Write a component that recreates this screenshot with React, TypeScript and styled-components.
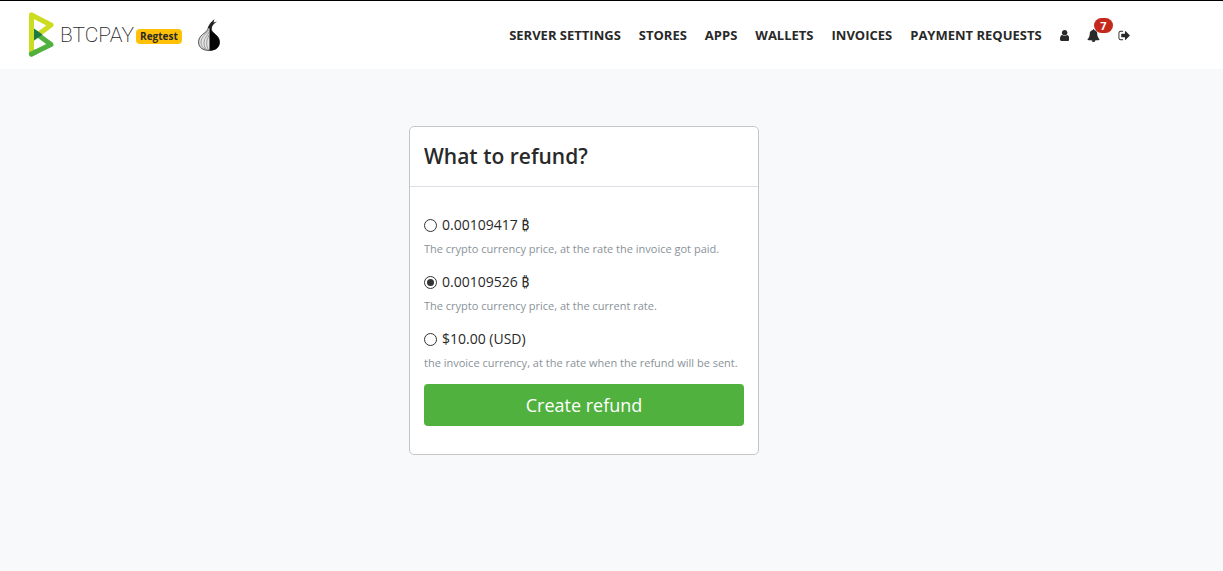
import React from "react";
import styled, { createGlobalStyle } from "styled-components";

const GlobalStyle = createGlobalStyle`
  *, *::before, *::after { box-sizing: border-box; }
  body {
    margin: 0;
    background: #f8f9fb;
    color: #292929;
    font-family: "Open Sans", "Noto Sans", sans-serif;
    font-size: 14px;
    line-height: 22px;
  }
`;

const Header = styled.header`
  background: #fff;
  border-top: 1px solid #000;
  padding-right: 55px;
`;

const HeaderInner = styled.div`
  display: flex;
  align-items: center;
  justify-content: space-between;
  max-width: 1140px;
  height: 68px;
  margin: 0 auto;
  padding: 0 15px 0 14px;
`;

const Brand = styled.div`
  display: flex;
  align-items: center;
`;

const Logo = styled.a`
  display: flex;
  align-items: center;
  gap: 6px;
  color: #292929;
  text-decoration: none;
`;

const LogoMark = styled.svg`
  display: block;
  width: 26px;
  height: 46px;
`;

const Wordmark = styled.span`
  font-family: Roboto, sans-serif;
  font-size: 21px;
  font-weight: 200;
  line-height: 26px;
`;

const NetworkBadge = styled.span`
  margin: 2px 0 0 2px;
  padding: 0 4px;
  border-radius: 4px;
  background: #ffc107;
  font-size: 10px;
  font-weight: 700;
  line-height: 15px;
`;

const Onion = styled.svg`
  display: block;
  width: 22px;
  height: 34px;
  margin-left: 16px;
`;

const Nav = styled.nav`
  display: flex;
  align-items: center;
`;

const NavLink = styled.a`
  position: relative;
  display: flex;
  align-items: center;
  padding: 0 9px;
  color: #292929;
  font-size: 13px;
  font-weight: 700;
  line-height: 20px;
  text-decoration: none;
  text-transform: uppercase;
  white-space: nowrap;
`;

const NavIcon = styled.svg`
  display: block;
  height: 13px;
  fill: currentColor;
`;

const Count = styled.span`
  position: absolute;
  top: -11px;
  left: 16px;
  width: 19px;
  border-radius: 8px;
  background: #c4291c;
  color: #fff;
  font-size: 11px;
  line-height: 15px;
  text-align: center;
`;

const Main = styled.main`
  display: flex;
  justify-content: center;
  padding: 57px 55px 57px 0;
`;

const Card = styled.section`
  width: 350px;
  max-width: 100%;
  border: 1px solid #c4c6c8;
  border-radius: 5px;
  background: #fff;
`;

const CardTitle = styled.h1`
  margin: 0;
  padding: 15px 14px 16px;
  border-bottom: 1px solid #dedee6;
  font-size: 21px;
  font-weight: 600;
  line-height: 28px;
`;

const RefundForm = styled.form`
  padding: 27px 14px 28px;
`;

const Options = styled.div`
  display: grid;
  gap: 14px;
`;

const OptionLabel = styled.label`
  display: flex;
  align-items: center;
  gap: 5px;
  margin-bottom: 4px;
`;

const Radio = styled.input`
  appearance: none;
  display: grid;
  place-content: center;
  width: 13px;
  height: 13px;
  margin: 0;
  border: 1px solid #333;
  border-radius: 50%;
  background: #fff;

  &:checked::before {
    content: "";
    width: 7px;
    height: 7px;
    border-radius: 50%;
    background: #333;
  }
`;

const Hint = styled.p`
  margin: 0;
  color: #8a9299;
  font-size: 11px;
  line-height: 17px;
`;

const SubmitButton = styled.button`
  display: block;
  width: 100%;
  margin-top: 13px;
  padding: 8px 14px;
  border: 0;
  border-radius: 4px;
  background: #51b13e;
  color: #fff;
  font-family: inherit;
  font-size: 18px;
  line-height: 26px;
`;

const links = ["Server settings", "Stores", "Apps", "Wallets", "Invoices", "Payment requests"];

const options = [
  { id: "paid", label: "0.00109417 ₿", hint: "The crypto currency price, at the rate the invoice got paid." },
  { id: "current", label: "0.00109526 ₿", hint: "The crypto currency price, at the current rate." },
  { id: "fiat", label: "$10.00 (USD)", hint: "the invoice currency, at the rate when the refund will be sent." },
];

export default function App() {
  return (
    <>
      <GlobalStyle />
      <Header>
        <HeaderInner>
          <Brand>
            <Logo href="#">
              <LogoMark viewBox="0 0 26 46" fill="none" strokeWidth="5" strokeLinecap="round" strokeLinejoin="round" aria-hidden="true">
                <path d="M3.5 42V3L23 13L3.5 27.5" stroke="#cedc21" />
                <path d="M3.5 42L23 32.5L6 20" stroke="#51b13e" />
                <path d="M3.5 3V38" stroke="#cedc21" />
                <path d="M3.5 42L8 39.8" stroke="#51b13e" />
                <path d="M6 16.5L14.5 22.5L6 28.5Z" fill="#1e7a44" />
              </LogoMark>
              <Wordmark>BTCPAY</Wordmark>
            </Logo>
            <NetworkBadge>Regtest</NetworkBadge>
            <Onion viewBox="0 0 22 34" role="img" aria-label="Tor">
              <path d="M10.5 9C10 13 7 14.5 4.5 16.5C1.5 19 .6 21.5 .6 24.2C.6 29.5 5 32.4 11 32.4C17 32.4 21.4 29.5 21.4 24.2C21.4 21.5 20.5 19 17.5 16.5C15 14.5 13 13 13 9Z" fill="#e4e4e4" stroke="#333" strokeWidth="0.9" />
              <path d="M11.5 10V32.6C17.5 32.6 21.6 29.5 21.6 24.2C21.6 21.5 20.5 19 17.5 16.5C15 14.5 13 13 13 10Z" fill="#050505" />
              <path d="M10.5 12C9 16 3 18.5 3 24C3 27.5 4.5 29.5 7 31M11 14C9.5 18 6 20 6 24.5C6 28 7 30 9 32M11 17C10 20 8.7 22 8.7 25C8.7 28 9.5 30 10.5 32" fill="none" stroke="#888" strokeWidth="0.8" />
              <path d="M10 10C10.5 7 12 5 16.5 1L15.5 4.5L19 3.5C15.5 6 13.8 8 13.5 11Z" fill="#222" />
            </Onion>
          </Brand>
          <Nav>
            {links.map((text) => (
              <NavLink key={text} href="#">{text}</NavLink>
            ))}
            <NavLink href="#" aria-label="Account">
              <NavIcon viewBox="0 0 1280 1792">
                <path d="M1280 1399q0 109-62.5 187t-150.5 78h-854q-88 0-150.5-78t-62.5-187q0-85 8.5-160.5t31.5-152 58.5-131 94-89 134.5-34.5q131 128 313 128t313-128q76 0 134.5 34.5t94 89 58.5 131 31.5 152 8.5 160.5zm-256-887q0 159-112.5 271.5t-271.5 112.5-271.5-112.5-112.5-271.5 112.5-271.5 271.5-112.5 271.5 112.5 112.5 271.5z" />
              </NavIcon>
            </NavLink>
            <NavLink href="#" aria-label="Notifications">
              <NavIcon viewBox="0 0 1792 1792">
                <path d="M912 1696q0-16-16-16-59 0-101.5-42.5t-42.5-101.5q0-16-16-16t-16 16q0 73 51.5 124.5t124.5 51.5q16 0 16-16zm816-288q0 52-38 90t-90 38h-448q0 106-75 181t-181 75-181-75-75-181h-448q-52 0-90-38t-38-90q50-42 91-88t85-119.5 74.5-158.5 50-206 19.5-260q0-152 117-282.5t307-158.5q-8-19-8-39 0-40 28-68t68-28 68 28 28 68q0 20-8 39 190 28 307 158.5t117 282.5q0 139 19.5 260t50 206 74.5 158.5 85 119.5 91 88z" />
              </NavIcon>
              <Count>7</Count>
            </NavLink>
            <NavLink href="#" aria-label="Logout">
              <NavIcon viewBox="0 0 1664 1792">
                <path d="M704 1440q0 4 1 20t.5 26.5-3 23.5-10 19.5-20.5 6.5h-320q-119 0-203.5-84.5t-84.5-203.5v-704q0-119 84.5-203.5t203.5-84.5h320q13 0 22.5 9.5t9.5 22.5q0 4 1 20t.5 26.5-3 23.5-10 19.5-20.5 6.5h-320q-66 0-113 47t-47 113v704q0 66 47 113t113 47h312l11.5 1 11.5 3 8 5.5 7 9 2 13.5zm928-544q0 26-19 45l-544 544q-19 19-45 19t-45-19-19-45v-288h-448q-26 0-45-19t-19-45v-384q0-26 19-45t45-19h448v-288q0-26 19-45t45-19 45 19l544 544q19 19 19 45z" />
              </NavIcon>
            </NavLink>
          </Nav>
        </HeaderInner>
      </Header>
      <Main>
        <Card>
          <CardTitle>What to refund?</CardTitle>
          <RefundForm onSubmit={(event: React.FormEvent) => event.preventDefault()}>
            <Options>
              {options.map(({ id, label, hint }) => (
                <div key={id}>
                  <OptionLabel htmlFor={id}>
                    <Radio type="radio" name="refund" id={id} defaultChecked={id === "current"} aria-describedby={`${id}-hint`} />
                    {label}
                  </OptionLabel>
                  <Hint id={`${id}-hint`}>{hint}</Hint>
                </div>
              ))}
            </Options>
            <SubmitButton type="submit">Create refund</SubmitButton>
          </RefundForm>
        </Card>
      </Main>
    </>
  );
}
